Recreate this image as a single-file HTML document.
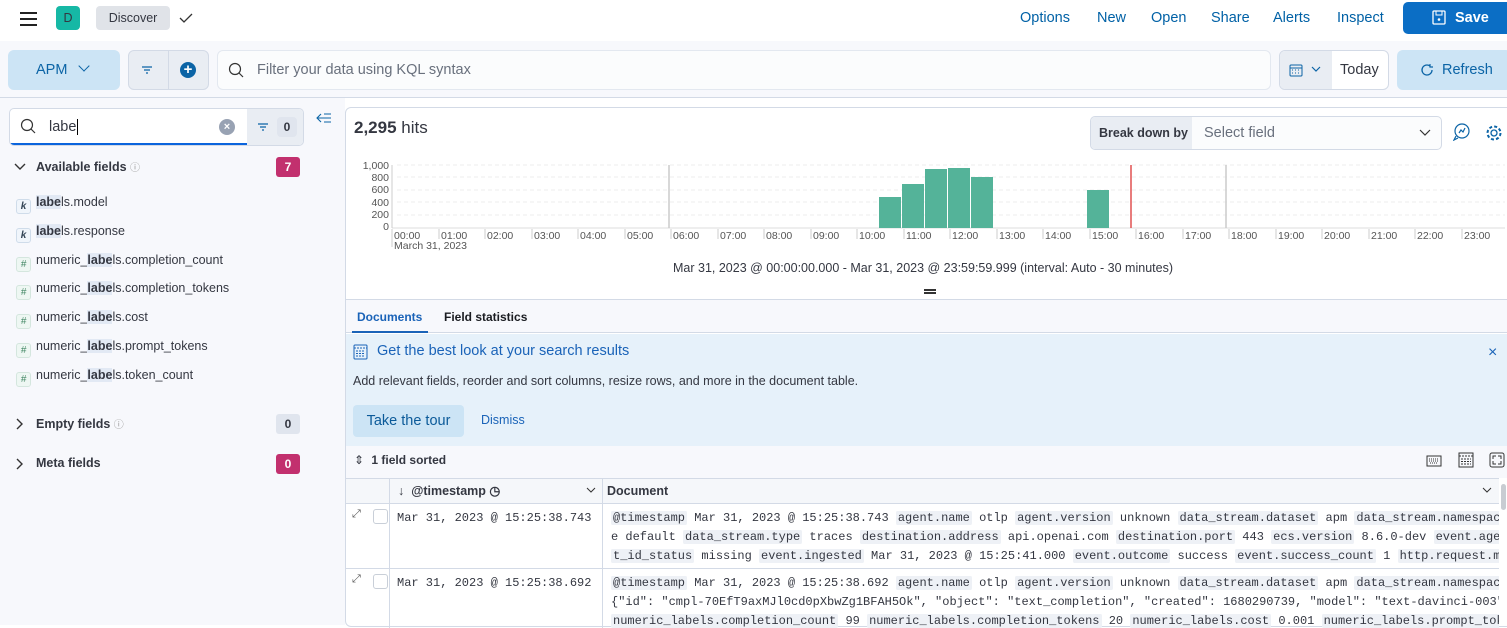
<!DOCTYPE html>
<html><head><meta charset="utf-8">
<style>
*{box-sizing:border-box;margin:0;padding:0}
body{width:1507px;height:625px;overflow:hidden;background:#fff;font-family:"Liberation Sans",sans-serif;color:#343741;position:relative;font-size:14px}
.abs{position:absolute}
.mono{font-family:"Liberation Mono",monospace;font-size:12px}
.k{background:#eef1f6;padding:1px 2px;border-radius:3px}
.line{position:absolute;white-space:nowrap;overflow:hidden;width:888px;left:611px;color:#343741}
.hl{background:#e2e9f4;font-weight:bold}
.nav{position:absolute;top:10px;color:#0061a6;font-size:14.5px}
.ik{display:inline-block;width:15px;height:15px;border:1px solid #cfdcea;border-radius:3px;background:#f0f5fb;color:#345;font-size:10px;text-align:center;line-height:13px;font-weight:bold;font-style:italic;vertical-align:-3px;margin-right:5px}
.ih{display:inline-block;width:15px;height:15px;border:1px solid #d4e6de;border-radius:3px;background:#eef7f3;color:#486;font-size:10px;text-align:center;line-height:13px;font-style:italic;vertical-align:-3px;margin-right:5px}
</style></head><body>
<div class="abs" style="left:0;top:0;width:1507px;height:41px;background:#fff;box-shadow:0 1px 3px rgba(0,0,0,.18)"></div>
<div class="abs" style="left:20px;top:12px;width:17px;height:2px;background:#222;box-shadow:0 6px 0 #222,0 12px 0 #222"></div>
<div class="abs" style="left:56px;top:6px;width:24px;height:24px;background:#16b8a5;border-radius:4px;font-size:12.5px;text-align:center;line-height:24px">D</div>
<div class="abs" style="left:96px;top:6px;width:74px;height:24px;background:#e0e3e8;border-radius:4px;font-size:12.5px;text-align:center;line-height:24px">Discover</div>
<svg class="abs" style="left:179px;top:12px" width="14" height="12"><path d="M1 6l4 4 8-8" stroke="#333" fill="none" stroke-width="1.3"/></svg>
<div class="nav" style="left:1020px">Options</div>
<div class="nav" style="left:1097px">New</div>
<div class="nav" style="left:1151px">Open</div>
<div class="nav" style="left:1211px">Share</div>
<div class="nav" style="left:1273px">Alerts</div>
<div class="nav" style="left:1337px">Inspect</div>
<div class="abs" style="left:1403px;top:2px;width:110px;height:32px;background:#0b6ec5;border-radius:5px;color:#fff;font-weight:bold;line-height:32px;padding-left:52px;font-size:14.5px">Save</div>
<svg class="abs" style="left:1432px;top:10px" width="14" height="15"><rect x="1" y="1" width="12" height="13" rx="1" fill="none" stroke="#fff" stroke-width="1.3"/><rect x="4" y="1" width="6" height="4" fill="none" stroke="#fff"/><circle cx="7" cy="9.5" r="1.3" fill="#fff"/></svg>
<div class="abs" style="left:0;top:41px;width:1507px;height:57px;background:#f7f8fc;border-bottom:1px solid #d3dae6"></div>
<div class="abs" style="left:8px;top:50px;width:112px;height:40px;background:#cce4f5;border-radius:6px;color:#0b64a6;font-size:14.5px;line-height:40px;padding-left:28px">APM <span style="display:inline-block;width:8px;height:8px;border-right:1.6px solid #0b64a6;border-bottom:1.6px solid #0b64a6;transform:rotate(45deg);margin:0 0 4px 9px"></span></div>
<div class="abs" style="left:128px;top:50px;width:81px;height:40px;background:#e9edf3;border:1px solid #d3dae6;border-radius:6px"></div>
<div class="abs" style="left:168px;top:51px;width:1px;height:38px;background:#d3dae6"></div>
<svg class="abs" style="left:141px;top:65px" width="12" height="10"><path d="M1 2h10M3 5h6M5 8h2" stroke="#0b64a6" stroke-width="1.2"/></svg>
<div class="abs" style="left:180px;top:62px;width:16px;height:16px;border-radius:50%;background:#0b64a6;color:#fff;text-align:center;line-height:16px;font-weight:bold;font-size:15px">+</div>
<div class="abs" style="left:217px;top:50px;width:1054px;height:40px;background:#fbfcfd;border:1px solid #e3e8f0;border-radius:6px"></div>
<svg class="abs" style="left:228px;top:62px" width="16" height="16"><circle cx="7" cy="7" r="5.5" fill="none" stroke="#333" stroke-width="1.2"/><path d="M11 11l4 4" stroke="#333" stroke-width="1.2"/></svg>
<div class="abs" style="left:257px;top:62px;color:#69707d;font-size:14.5px">Filter your data using KQL syntax</div>
<div class="abs" style="left:1279px;top:50px;width:110px;height:40px;background:#fff;border:1px solid #d3dae6;border-radius:6px;overflow:hidden"><div style="width:52px;height:40px;background:#e9edf3"></div></div>
<svg class="abs" style="left:1289px;top:63px" width="14" height="14"><rect x="1" y="2" width="12" height="11" rx="1" fill="none" stroke="#0b64a6"/><path d="M1 5h12M3 7h1M6 7h1M9 7h1M3 10h1M6 10h1M9 10h1" stroke="#0b64a6"/></svg>
<svg class="abs" style="left:1311px;top:66px" width="10" height="6"><path d="M1 1l4 4 4-4" stroke="#0b64a6" fill="none" stroke-width="1.2"/></svg>
<div class="abs" style="left:1340px;top:62px;font-size:14.5px">Today</div>
<div class="abs" style="left:1397px;top:50px;width:115px;height:40px;background:#cce4f5;border-radius:6px;color:#0b64a6;line-height:40px;padding-left:45px;font-size:14.5px">Refresh</div>
<svg class="abs" style="left:1420px;top:63px" width="14" height="14"><path d="M12 7a5 5 0 1 1-2-4" stroke="#0b64a6" fill="none" stroke-width="1.3"/><path d="M10 1v3h3" stroke="#0b64a6" fill="none" stroke-width="1.2"/></svg>
<div class="abs" style="left:0;top:98px;width:345px;height:527px;background:#f7f8fc"></div>
<div class="abs" style="left:9px;top:108px;width:295px;height:38px;background:#fff;border:1px solid #d3dae6;border-radius:5px;overflow:hidden"><div style="position:absolute;left:237px;top:0;width:60px;height:38px;background:#e9edf3"></div><div style="position:absolute;left:0;bottom:0;width:237px;height:2px;background:#0b64dd"></div></div>
<svg class="abs" style="left:20px;top:118px" width="16" height="16"><circle cx="7" cy="7" r="5.5" fill="none" stroke="#333" stroke-width="1.2"/><path d="M11 11l4 4" stroke="#333" stroke-width="1.2"/></svg>
<div class="abs" style="left:49px;top:119px;font-size:14.5px">labe<span style="border-left:1px solid #000;margin-left:1px"></span></div>
<div class="abs" style="left:219px;top:119px;width:16px;height:16px;border-radius:50%;background:#98a2b3;color:#fff;font-size:11px;text-align:center;line-height:16px;font-weight:bold">×</div>
<svg class="abs" style="left:257px;top:122px" width="12" height="10"><path d="M1 2h10M3 5h6M5 8h2" stroke="#0b64a6" stroke-width="1.2"/></svg>
<div class="abs" style="left:277px;top:117px;width:20px;height:20px;border-radius:4px;background:#e0e5ee;font-size:12px;font-weight:bold;text-align:center;line-height:20px">0</div>
<svg class="abs" style="left:316px;top:112px" width="16" height="12"><path d="M1 6h14M5 2L1 6l4 4M8 2h7M8 10h7" stroke="#0b64a6" fill="none" stroke-width="1.1"/></svg>
<svg class="abs" style="left:14px;top:163px" width="12" height="8"><path d="M1 1l5 5 5-5" stroke="#333" fill="none" stroke-width="1.4"/></svg>
<div class="abs" style="left:36px;top:159px;font-size:12.5px;font-weight:bold">Available fields <span style="font-weight:normal;color:#999;font-size:10px">ⓘ</span></div>
<div class="abs" style="left:276px;top:157px;width:24px;height:20px;border-radius:3px;background:#c2306e;color:#fff;font-size:12px;font-weight:bold;text-align:center;line-height:20px">7</div>
<div class="abs" style="left:16px;top:188px;font-size:12.5px;line-height:28.8px">
<div><span class="ik">k</span><span class="hl">labe</span>ls.model</div>
<div><span class="ik">k</span><span class="hl">labe</span>ls.response</div>
<div><span class="ih">#</span>numeric_<span class="hl">labe</span>ls.completion_count</div>
<div><span class="ih">#</span>numeric_<span class="hl">labe</span>ls.completion_tokens</div>
<div><span class="ih">#</span>numeric_<span class="hl">labe</span>ls.cost</div>
<div><span class="ih">#</span>numeric_<span class="hl">labe</span>ls.prompt_tokens</div>
<div><span class="ih">#</span>numeric_<span class="hl">labe</span>ls.token_count</div>
</div>
<svg class="abs" style="left:16px;top:418px" width="8" height="12"><path d="M1 1l5 5-5 5" stroke="#333" fill="none" stroke-width="1.4"/></svg>
<div class="abs" style="left:36px;top:416px;font-size:12.5px;font-weight:bold">Empty fields <span style="font-weight:normal;color:#999;font-size:10px">ⓘ</span></div>
<div class="abs" style="left:276px;top:414px;width:24px;height:20px;border-radius:3px;background:#e0e5ee;font-size:12px;font-weight:bold;text-align:center;line-height:20px">0</div>
<svg class="abs" style="left:16px;top:458px" width="8" height="12"><path d="M1 1l5 5-5 5" stroke="#333" fill="none" stroke-width="1.4"/></svg>
<div class="abs" style="left:36px;top:456px;font-size:12.5px;font-weight:bold">Meta fields</div>
<div class="abs" style="left:276px;top:454px;width:24px;height:20px;border-radius:3px;background:#c2306e;color:#fff;font-size:12px;font-weight:bold;text-align:center;line-height:20px">0</div>
<div class="abs" style="left:345px;top:107px;width:1170px;height:520px;border:1px solid #d3dae6;border-radius:6px;background:#fff"></div>
<div class="abs" style="left:354px;top:118px;font-size:17px"><b>2,295</b> hits</div>
<div class="abs" style="left:1090px;top:116px;width:352px;height:34px;border:1px solid #d3dae6;border-radius:5px;background:#fbfcfd;overflow:hidden"><div style="width:101px;height:34px;background:#e9edf3;font-size:12.5px;font-weight:bold;line-height:32px;padding-left:8px">Break down by</div></div>
<div class="abs" style="left:1204px;top:125px;color:#69707d;font-size:14.5px">Select field</div>
<svg class="abs" style="left:1419px;top:129px" width="12" height="7"><path d="M1 1l5 5 5-5" stroke="#333" fill="none" stroke-width="1.2"/></svg>
<svg class="abs" style="left:1453px;top:123px" width="18" height="18"><circle cx="9" cy="8" r="7" fill="none" stroke="#0b64a6" stroke-width="1.2"/><path d="M3 13l-2 4 4-2M6 10l2-3 2 2 2-4" stroke="#0b64a6" fill="none" stroke-width="1.2"/></svg>
<svg class="abs" style="left:1485px;top:124px" width="18" height="18"><circle cx="9" cy="9" r="3" fill="none" stroke="#0b64a6" stroke-width="1.3"/><circle cx="9" cy="9" r="6.5" fill="none" stroke="#0b64a6" stroke-width="2" stroke-dasharray="3 2.1"/></svg>
<svg class="abs" style="left:345px;top:150px" width="1162" height="110" font-family="Liberation Sans" font-size="10.5" fill="#555">
<g stroke="#eee" stroke-dasharray="4 3"><path d="M52 15H1160M52 27H1160M52 40H1160M52 52H1160M52 65H1160"/></g>
<path d="M47 78H1160" stroke="#ddd"/>
<path d="M47 15V78" stroke="#ccc"/>
<g text-anchor="end"><text x="44" y="19">1,000</text><text x="44" y="31">800</text><text x="44" y="43">600</text><text x="44" y="56">400</text><text x="44" y="68">200</text><text x="44" y="80">0</text></g>
<path d="M324 15V78M881 15V78" stroke="#ccc" stroke-width="1.5"/>
<path d="M786 15V78" stroke="#e05050" stroke-width="1.5"/>
<g fill="#54b399"><rect x="534" y="47" width="22" height="31"/><rect x="557" y="34" width="22" height="44"/><rect x="580" y="19" width="22" height="59"/><rect x="603" y="18" width="22" height="60"/><rect x="626" y="27" width="22" height="51"/><rect x="742" y="40" width="22" height="38"/></g>
<g stroke="#ccc"><path d="M47 79v18M94 79v10M140 79v10M187 79v10M233 79v10M280 79v10M326 79v10M373 79v10M419 79v10M466 79v10M512 79v10M559 79v10M605 79v10M652 79v10M698 79v10M745 79v10M791 79v10M838 79v10M884 79v10M931 79v10M977 79v10M1024 79v10M1070 79v10M1117 79v10"/></g>
<g><text x="49" y="89">00:00</text><text x="96" y="89">01:00</text><text x="142" y="89">02:00</text><text x="189" y="89">03:00</text><text x="235" y="89">04:00</text><text x="282" y="89">05:00</text><text x="328" y="89">06:00</text><text x="375" y="89">07:00</text><text x="421" y="89">08:00</text><text x="468" y="89">09:00</text><text x="514" y="89">10:00</text><text x="561" y="89">11:00</text><text x="607" y="89">12:00</text><text x="654" y="89">13:00</text><text x="700" y="89">14:00</text><text x="747" y="89">15:00</text><text x="793" y="89">16:00</text><text x="840" y="89">17:00</text><text x="886" y="89">18:00</text><text x="933" y="89">19:00</text><text x="979" y="89">20:00</text><text x="1026" y="89">21:00</text><text x="1072" y="89">22:00</text><text x="1119" y="89">23:00</text><text x="49" y="99">March 31, 2023</text></g>
</svg>
<div class="abs" style="left:673px;top:261px;font-size:12.5px">Mar 31, 2023 @ 00:00:00.000 - Mar 31, 2023 @ 23:59:59.999 (interval: Auto - 30 minutes)</div>
<div class="abs" style="left:924px;top:289px;width:12px;height:1.5px;background:#333;box-shadow:0 3px 0 #333"></div>
<div class="abs" style="left:346px;top:299px;width:1161px;height:1px;background:#d3dae6"></div>
<div class="abs" style="left:346px;top:300px;width:1161px;height:33px;background:#f7f8fc;border-bottom:1px solid #d3dae6"></div>
<div class="abs" style="left:357px;top:310px;font-size:12px;font-weight:bold;color:#1a63b8">Documents</div>
<div class="abs" style="left:352px;top:331px;width:76px;height:2px;background:#1a63b8"></div>
<div class="abs" style="left:444px;top:310px;font-size:12px;font-weight:bold;color:#1a1c21">Field statistics</div>
<div class="abs" style="left:346px;top:334px;width:1161px;height:112px;background:#e6f1fa"></div>
<svg class="abs" style="left:353px;top:344px" width="16" height="16"><rect x="1" y="1" width="13" height="14" rx="1" fill="none" stroke="#1a63b8"/><path d="M1 4h13M3 7h9M3 9.5h9M3 12h9" stroke="#1a63b8" stroke-dasharray="2 1"/></svg>
<div class="abs" style="left:377px;top:343px;font-size:14.5px;color:#1a63b8">Get the best look at your search results</div>
<div class="abs" style="left:1488px;top:344px;font-size:16px;color:#1a63b8">×</div>
<div class="abs" style="left:353px;top:374px;font-size:12.5px">Add relevant fields, reorder and sort columns, resize rows, and more in the document table.</div>
<div class="abs" style="left:353px;top:405px;width:111px;height:32px;background:#cce4f5;border-radius:4px;color:#0b5a99;font-size:14.5px;line-height:32px;text-align:center">Take the tour</div>
<div class="abs" style="left:481px;top:413px;font-size:12.5px;color:#1a63b8">Dismiss</div>
<div class="abs" style="left:346px;top:446px;width:1161px;height:32px;background:#f7f8fc"></div>
<div class="abs" style="left:354px;top:453px;font-size:12px">⇕ <b style="margin-left:4px">1 field sorted</b></div>
<svg class="abs" style="left:1426px;top:455px" width="16" height="12"><rect x="1" y="1" width="14" height="10" fill="none" stroke="#333"/><path d="M3 4h10M3 6h10M4 8h8" stroke="#333" stroke-dasharray="1 1"/></svg>
<svg class="abs" style="left:1458px;top:452px" width="16" height="16"><rect x="1" y="1" width="14" height="14" fill="none" stroke="#333"/><path d="M1 4h14M3 7h10M3 9.5h10M3 12h10" stroke="#333" stroke-dasharray="2 1"/></svg>
<svg class="abs" style="left:1489px;top:452px" width="16" height="16"><rect x="1" y="1" width="14" height="14" rx="2" fill="none" stroke="#333"/><path d="M4 7V4h3M9 4h3v3M12 9v3H9M7 12H4V9" stroke="#333" fill="none"/></svg>
<div class="abs" style="left:346px;top:478px;width:1153px;height:26px;background:#f5f7fa;border-top:1px solid #d3dae6;border-bottom:1px solid #d3dae6"></div>
<div class="abs" style="left:389px;top:478px;width:1px;height:150px;background:#d3dae6"></div>
<div class="abs" style="left:602px;top:478px;width:1px;height:150px;background:#d3dae6"></div>
<div class="abs" style="left:398px;top:483px;font-size:12.5px;font-weight:bold">↓ &nbsp;@timestamp ◷</div>
<svg class="abs" style="left:586px;top:487px" width="10" height="6"><path d="M1 1l4 4 4-4" stroke="#333" fill="none"/></svg>
<div class="abs" style="left:607px;top:484px;font-size:12.5px;font-weight:bold">Document</div>
<svg class="abs" style="left:1482px;top:487px" width="10" height="6"><path d="M1 1l4 4 4-4" stroke="#333" fill="none"/></svg>
<div class="abs" style="left:1501px;top:484px;width:5px;height:26px;background:#c8ccd2;border-radius:3px"></div>
<div class="abs" style="left:346px;top:568px;width:1153px;height:1px;background:#d3dae6"></div>
<div class="abs" style="left:352px;top:508px;font-size:11px;color:#555">⤢</div>
<div class="abs" style="left:373px;top:509px;width:15px;height:15px;border:1px solid #c9cfd8;border-radius:3px;background:#fff"></div>
<div class="abs mono" style="left:397px;top:511px">Mar 31, 2023 @ 15:25:38.743</div>
<div class="abs" style="left:352px;top:573px;font-size:11px;color:#555">⤢</div>
<div class="abs" style="left:373px;top:574px;width:15px;height:15px;border:1px solid #c9cfd8;border-radius:3px;background:#fff"></div>
<div class="abs mono" style="left:397px;top:576px">Mar 31, 2023 @ 15:25:38.692</div>
<div class="line mono" style="top:511px"><span class="k">@timestamp</span> Mar 31, 2023 @ 15:25:38.743 <span class="k">agent.name</span> otlp <span class="k">agent.version</span> unknown <span class="k">data_stream.dataset</span> apm <span class="k">data_stream.namespac</span></div>
<div class="line mono" style="top:530px">e default <span class="k">data_stream.type</span> traces <span class="k">destination.address</span> api.openai.com <span class="k">destination.port</span> 443 <span class="k">ecs.version</span> 8.6.0-dev <span class="k">event.agen</span></div>
<div class="line mono" style="top:549px"><span class="k">t_id_status</span> missing <span class="k">event.ingested</span> Mar 31, 2023 @ 15:25:41.000 <span class="k">event.outcome</span> success <span class="k">event.success_count</span> 1 <span class="k">http.request.m…</span></div>
<div class="line mono" style="top:576px"><span class="k">@timestamp</span> Mar 31, 2023 @ 15:25:38.692 <span class="k">agent.name</span> otlp <span class="k">agent.version</span> unknown <span class="k">data_stream.dataset</span> apm <span class="k">data_stream.namespace</span></div>
<div class="line mono" style="top:595px">{"id": "cmpl-70EfT9axMJl0cd0pXbwZg1BFAH5Ok", "object": "text_completion", "created": 1680290739, "model": "text-davinci-003"</div>
<div class="line mono" style="top:614px"> <span class="k">numeric_labels.completion_count</span> 99 <span class="k">numeric_labels.completion_tokens</span> 20 <span class="k">numeric_labels.cost</span> 0.001 <span class="k">numeric_labels.prompt_tok</span></div>
</body></html>
